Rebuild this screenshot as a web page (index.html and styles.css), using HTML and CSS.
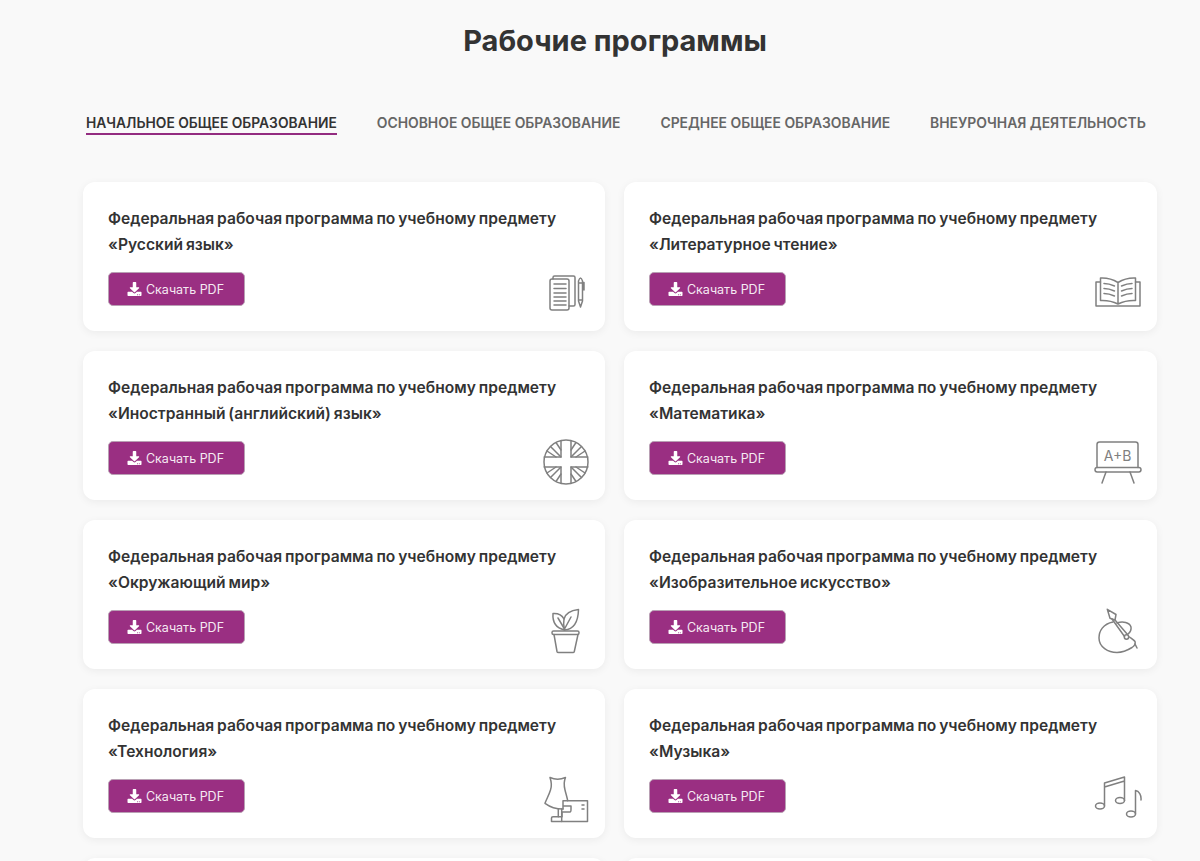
FILE: index.html
```html
<!DOCTYPE html>
<html lang="ru">
<head>
<meta charset="utf-8">
<title>Рабочие программы</title>
<link rel="stylesheet" href="styles.css">
</head>
<body>
<svg class="defs" width="0" height="0" aria-hidden="true"><symbol id="dl" viewBox="0 0 512 512"><path fill="currentColor" d="M216 0h80c13.300 0 24 10.700 24 24v168h87.700c17.800 0 26.700 21.500 14.100 34.100L269.700 378.300c-7.500 7.500-19.800 7.500-27.300 0L90.100 226.100c-12.600-12.600-3.700-34.100 14.100-34.100H192V24c0-13.300 10.700-24 24-24zm296 376v112c0 13.300-10.700 24-24 24H24c-13.300 0-24-10.700-24-24V376c0-13.300 10.700-24 24-24h146.700l49 49c20.100 20.100 52.500 20.100 72.600 0l49-49H488c13.300 0 24 10.700 24 24zm-124 88c0-11-9-20-20-20s-20 9-20 20 9 20 20 20 20-9 20-20zm64 0c0-11-9-20-20-20s-20 9-20 20 9 20 20 20 20-9 20-20z"/></symbol></svg>
<main class="page">
  <h1 class="title">Рабочие программы</h1>
  <nav class="tabs">
    <a class="tab active">Начальное общее образование</a>
    <a class="tab">Основное общее образование</a>
    <a class="tab">Среднее общее образование</a>
    <a class="tab">Внеурочная деятельность</a>
  </nav>
  <section class="grid">
    <article class="card">
      <h2 class="card-title">Федеральная рабочая программа по учебному предмету<br>«Русский язык»</h2>
      <a class="btn"><svg class="dl"><use href="#dl"/></svg>Скачать PDF</a>
      <svg class="icon" viewBox="0 0 48 48"><path d="M11 10V8.500Q11 7 12.500 7H31.500Q33 7 33 8.500V35.500Q33 37 31.500 37H27"/><rect x="8" y="10" width="19" height="31" rx="2"/><path d="M12 15H24M12 19.500H24M12 24H24M12 28H24M12 32H24M12 36H24"/><path d="M36.500 12Q38.500 6 40.500 12V32L38.500 38L36.500 32ZM36.500 14H40.500M36.500 31H40.500M40.500 13.500H42V21"/></svg>
    </article>
    <article class="card">
      <h2 class="card-title">Федеральная рабочая программа по учебному предмету<br>«Литературное чтение»</h2>
      <a class="btn"><svg class="dl"><use href="#dl"/></svg>Скачать PDF</a>
      <svg class="icon" viewBox="0 0 48 48"><path d="M6.500 13H2V37H46V13H41.500"/><path d="M24 35V13.500Q16 8.500 6.500 9V31.500Q16 31 24 35Q32 31 41.500 31.500V9Q32 8.500 24 13.500"/><path d="M10 14.500Q15 14.500 20.500 17M10 19.500Q15 19.500 20.500 22M10 24.500Q15 24.500 20.500 27M38 14.500Q33 14.500 27.500 17M38 19.500Q33 19.500 27.500 22M38 24.500Q33 24.500 27.500 27"/></svg>
    </article>
    <article class="card">
      <h2 class="card-title">Федеральная рабочая программа по учебному предмету<br>«Иностранный (английский) язык»</h2>
      <a class="btn"><svg class="dl"><use href="#dl"/></svg>Скачать PDF</a>
      <svg class="icon" viewBox="0 0 48 48"><circle cx="24" cy="24" r="22"/><path d="M19 2.500V19H2.200M29 2.500V19H45.800M19 45.500V29H2.200M29 45.500V29H45.800"/><path d="M8.500 8.500L19 19M5 13L14 19M14 4.500L19 12M39.500 8.500L29 19M43 13L34 19M34 4.500L29 12M8.500 39.500L19 29M5 35L14 29M14 43.500L19 36M39.500 39.500L29 29M43 35L34 29M34 43.500L29 36"/></svg>
    </article>
    <article class="card">
      <h2 class="card-title">Федеральная рабочая программа по учебному предмету<br>«Математика»</h2>
      <a class="btn"><svg class="dl"><use href="#dl"/></svg>Скачать PDF</a>
      <svg class="icon" viewBox="0 0 48 48"><path d="M3 29.500V6.500Q3 4 5.500 4H41.500Q44 4 44 6.500V29.500"/><rect x="1" y="29.500" width="46" height="4.500" rx="2.200"/><path d="M12 34L8 45M36 34L40 45"/><text class="icon-text" x="23.500" y="22.500" text-anchor="middle">A+B</text></svg>
    </article>
    <article class="card">
      <h2 class="card-title">Федеральная рабочая программа по учебному предмету<br>«Окружающий мир»</h2>
      <a class="btn"><svg class="dl"><use href="#dl"/></svg>Скачать PDF</a>
      <svg class="icon" viewBox="0 0 48 48"><rect x="10" y="24" width="27" height="3.500" rx="1.500"/><path d="M12 27.500L15 44.500Q15.200 45.500 16.500 45.500H31Q32 45.500 32.300 44.500L36 27.500"/><path d="M22.500 23Q10 20 11 6.500Q19 6 22 12"/><path d="M22.500 23Q36 22 36.500 2.500Q24 4 22 12Q21 17 22.500 23Z"/><path d="M16 11L22.500 22L29 10"/></svg>
    </article>
    <article class="card">
      <h2 class="card-title">Федеральная рабочая программа по учебному предмету<br>«Изобразительное искусство»</h2>
      <a class="btn"><svg class="dl"><use href="#dl"/></svg>Скачать PDF</a>
      <svg class="icon" viewBox="0 0 48 48"><path d="M19 15C9 17 5 24 5 31C5 40 14 45.500 23 45.500C29 45.500 34 43 38 40.500C41 38.500 41.500 36 41 34.500C40 33 37.500 31.500 35.500 30"/><path d="M23 16C29 14 35.500 15.500 37 20C37.500 23 36.500 25 34 27"/><path d="M13.300 2.300L22 7.500L21 13L16 11.300Z"/><path d="M18 12L30.500 29.500M21 13L33.500 27.500"/><circle cx="32.500" cy="30" r="2.200"/><path d="M41 37L43 41"/></svg>
    </article>
    <article class="card">
      <h2 class="card-title">Федеральная рабочая программа по учебному предмету<br>«Технология»</h2>
      <a class="btn"><svg class="dl"><use href="#dl"/></svg>Скачать PDF</a>
      <svg class="icon" viewBox="0 0 48 48"><path d="M8 1.500Q15.500 5 23.500 1.500C21.500 6 22 10 23 14C24 18 25 21 25.700 24.700M8 1.500C9.500 6 10 10 8.500 14C7 19 4.500 23 3 27.300C8 31 14 33 21 33"/><path d="M16.300 33V40.700M19.700 33V40.700"/><path d="M21 33V24.700H45.500V45.500H9.500V42Q9.500 40.700 11 40.700H20V36H28Q29 36 29 33V30H21"/><path d="M19.700 41V45.500M40 29H42M40 33H42"/></svg>
    </article>
    <article class="card">
      <h2 class="card-title">Федеральная рабочая программа по учебному предмету<br>«Музыка»</h2>
      <a class="btn"><svg class="dl"><use href="#dl"/></svg>Скачать PDF</a>
      <svg class="icon" viewBox="0 0 48 48"><ellipse cx="6" cy="30" rx="4.500" ry="3"/><ellipse cx="26" cy="24.500" rx="4.500" ry="3"/><ellipse cx="37" cy="38" rx="4.500" ry="3"/><path d="M10.500 30V7L30.500 1V24.500M10.500 11L30.500 5"/><path d="M41.500 38V14.500C45 15 47.500 19 47 24"/></svg>
    </article>
    <article class="card"></article>
    <article class="card"></article>
  </section>
</main>
</body>
</html>
```

FILE: styles.css
```css
* { box-sizing: border-box; }
html, body { margin: 0; height: 861px; overflow: hidden; }
body {
  background: #f9f9f9;
  color: #333;
  font-family: Inter, "Noto Sans", sans-serif;
}
.defs { display: block; height: 0; }
.page { height: 861px; overflow: hidden; padding: 23px 43px 0 83px; }
.title {
  margin: 0 0 0 -10px;
  font-size: 29px;
  line-height: 36px;
  font-weight: 700;
  text-align: center;
  color: #333;
}
.tabs {
  display: flex;
  gap: 40px;
  margin-top: 54px;
  padding-left: 3px;
}
.tab {
  font-size: 13.900px;
  line-height: 20px;
  font-weight: 600;
  text-transform: uppercase;
  white-space: nowrap;
  color: #666;
  border-bottom: 2px solid transparent;
}
.tab.active {
  font-size: 13.800px;
  color: #333;
  border-bottom-color: #932c80;
}
.grid {
  display: grid;
  grid-template-columns: 522px 533px;
  grid-auto-rows: 149px;
  column-gap: 19px;
  row-gap: 20px;
  margin-top: 47px;
}
.card {
  position: relative;
  padding: 24px 25px;
  background: #fff;
  border-radius: 12px;
  box-shadow: 0 2px 8px rgba(0, 0, 0, .06);
}
.card-title {
  margin: 0;
  font-size: 15.600px;
  line-height: 26px;
  font-weight: 600;
  word-spacing: -1px;
  color: #333;
}
.btn {
  display: inline-flex;
  align-items: center;
  justify-content: center;
  gap: 4px;
  width: 137px;
  height: 34px;
  margin-top: 14px;
  padding-right: 2px;
  font-size: 12.500px;
  color: #f5e9f2;
  background: #9a2f82;
  border: 1px solid #b9a0b4;
  border-radius: 5px;
}
.dl { width: 15px; height: 14px; color: #fff; }
.icon {
  position: absolute;
  right: 15px;
  bottom: 14px;
  width: 48px;
  height: 48px;
  fill: none;
  stroke: #808080;
  stroke-width: 1.500;
  stroke-linecap: round;
  stroke-linejoin: round;
}
.icon-text {
  font-family: Inter, sans-serif;
  font-size: 14px;
  fill: #808080;
  stroke: none;
}
```
